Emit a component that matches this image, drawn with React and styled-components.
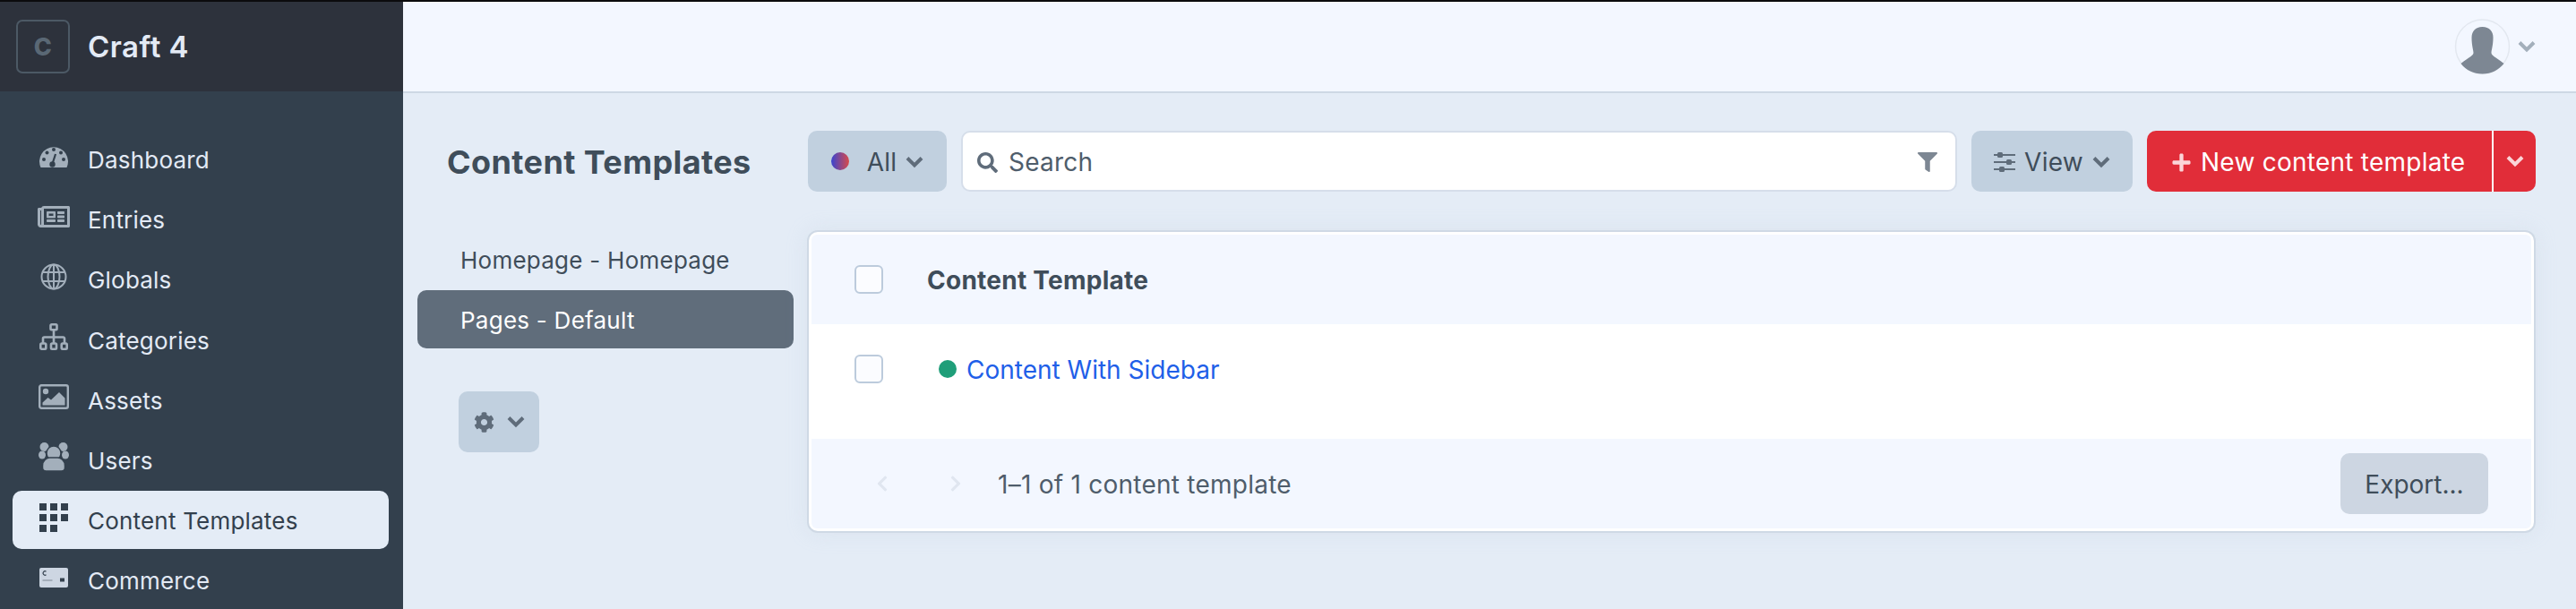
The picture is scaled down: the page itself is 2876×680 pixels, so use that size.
import React from 'react';
import styled, { createGlobalStyle } from 'styled-components';
import { FaRegNewspaper, FaChevronLeft, FaChevronRight, FaFilter, FaCog, FaPlus, FaSearch } from 'react-icons/fa';

const GlobalStyle = createGlobalStyle`
    html, body {
        margin: 0;
        padding: 0;
        background: #e4ecf6;
    }
    * {
        box-sizing: border-box;
    }
    body {
        font-family: Inter, 'Liberation Sans', sans-serif;
        font-size: 28px;
        letter-spacing: 0.25px;
        color: #3f4d5a;
    }
`;

const GaugeIcon = () => (
    <svg width="32" height="25" viewBox="0 0 32 25">
        <path d="M1.500 25A16 16 0 1 1 30.500 25Z" fill="currentColor" />
        <g fill="#33404d">
            <circle cx="5" cy="16" r="2" />
            <circle cx="8.500" cy="8.500" r="2" />
            <circle cx="16" cy="5" r="2" />
            <circle cx="24" cy="8.500" r="2" />
            <circle cx="27" cy="16" r="2" />
            <circle cx="14.500" cy="21.500" r="3.200" />
        </g>
        <path d="M14.500 21l3.500-11" stroke="#33404d" strokeWidth="2.200" />
    </svg>
);

const GlobeIcon = () => (
    <svg width="30" height="30" viewBox="0 0 30 30" fill="none" stroke="currentColor" strokeWidth="2">
        <circle cx="15" cy="15" r="13.500" />
        <ellipse cx="15" cy="15" rx="6.500" ry="13.500" />
        <path d="M15 1.500v27M2.500 10h25M2.500 20h25" />
    </svg>
);

const SitemapIcon = () => (
    <svg width="32" height="30" viewBox="0 0 32 30" fill="none" stroke="currentColor" strokeWidth="2.600">
        <rect x="12.500" y="1.300" width="7" height="6" rx="1.200" />
        <path d="M16 7v15M4 22v-5a1.500 1.500 0 0 1 1.500-1.500h21A1.500 1.500 0 0 1 28 17v5" />
        <rect x="1.300" y="22.500" width="6" height="6.200" rx="1.200" />
        <rect x="13" y="22.500" width="6" height="6.200" rx="1.200" />
        <rect x="24.700" y="22.500" width="6" height="6.200" rx="1.200" />
    </svg>
);

const PictureIcon = () => (
    <svg width="34" height="28" viewBox="0 0 34 28" fill="currentColor">
        <rect x="1.200" y="1.200" width="31.600" height="25.600" rx="2" fill="none" stroke="currentColor" strokeWidth="2.400" />
        <circle cx="8" cy="8" r="3.200" />
        <path d="M4.500 23.500v-3l6-5.500 3.500 2.500 9-8.500 6.500 6.500v8z" />
    </svg>
);

const UsersIcon = () => (
    <svg width="34" height="32" viewBox="0 0 34 32" fill="currentColor">
        <circle cx="6.500" cy="5" r="5" />
        <circle cx="27.500" cy="5" r="5" />
        <ellipse cx="4" cy="14" rx="4" ry="4.500" />
        <ellipse cx="30" cy="14" rx="4" ry="4.500" />
        <circle cx="17" cy="12" r="8" stroke="#33404d" strokeWidth="1.500" />
        <path d="M4.500 26c0-6 5-9 8-9h9c3 0 8 3 8 9v2c0 2.500-2 4-4 4h-17c-2 0-4-1.500-4-4z" stroke="#33404d" strokeWidth="1.500" />
    </svg>
);

const GridIcon = () => (
    <svg width="32" height="32" viewBox="0 0 32 32" fill="currentColor">
        {[[0, 0], [12, 0], [24, 0], [0, 12], [12, 12], [24, 12], [0, 24], [12, 24]].map(([x, y]) => (
            <rect key={`${x}-${y}`} x={x} y={y} width="8" height="8" />
        ))}
    </svg>
);

const CardIcon = () => (
    <svg width="32" height="22" viewBox="0 0 32 22">
        <rect width="32" height="22" rx="2" fill="#cdd6e2" />
        <path d="M7.500 4.200a2.200 2.200 0 1 0 0 3.600" fill="none" stroke="#33404d" strokeWidth="1.200" />
        <path d="M3.500 14h11" stroke="#7d8793" strokeWidth="1" />
        <rect x="23" y="11.500" width="5" height="4" fill="#33404d" />
    </svg>
);

const AvatarIcon = () => (
    <svg width="63" height="62" viewBox="0 0 63 62">
        <circle cx="31.500" cy="31" r="30" fill="none" stroke="#e3e8f0" strokeWidth="1.500" />
        <path d="M31.500 9c8 0 12 5 12 12 0 9-2 14-2 17 0 3 4 4 14 12-6 7-14 11.500-24 11.500S13.500 57.500 7.500 50c10-8 14-9 14-12 0-3-2-8-2-17 0-7 4-12 12-12z" fill="#7d8793" />
    </svg>
);

const SlidersIcon = () => (
    <svg width="24" height="22" viewBox="0 0 24 22" fill="#5f6c7a">
        <path d="M0 2h24v2H0zM0 10h24v2H0zM0 18h24v2H0z" />
        <rect x="4" y="0" width="6" height="6" rx="1.500" />
        <rect x="14" y="8" width="6" height="6" rx="1.500" />
        <rect x="6" y="16" width="6" height="6" rx="1.500" />
    </svg>
);

const ChevronGlyph = ({ className }) => (
    <svg className={className} width="20" height="14" viewBox="0 0 20 14" fill="none" stroke="currentColor" strokeWidth="4">
        <path d="M2 2.500l8 8 8-8" />
    </svg>
);

const navItems = [
    { label: 'Dashboard', icon: <GaugeIcon /> },
    { label: 'Entries', icon: <FaRegNewspaper size={36} /> },
    { label: 'Globals', icon: <GlobeIcon /> },
    { label: 'Categories', icon: <SitemapIcon /> },
    { label: 'Assets', icon: <PictureIcon /> },
    { label: 'Users', icon: <UsersIcon /> },
    { label: 'Content Templates', icon: <GridIcon />, active: true },
    { label: 'Commerce', icon: <CardIcon /> },
];

const App = () => (
    <Page>
        <GlobalStyle />
        <Sidebar>
            <Brand>
                <LogoBox>C</LogoBox>
                <BrandName>Craft 4</BrandName>
            </Brand>
            <Nav>
                {navItems.map(item => (
                    <NavItem key={item.label} $active={item.active}>
                        <NavIcon $active={item.active}>{item.icon}</NavIcon>
                        {item.label}
                    </NavItem>
                ))}
            </Nav>
        </Sidebar>
        <Main>
            <TopBar>
                <AvatarIcon />
                <UserChevron />
            </TopBar>
            <Content>
                <LeftColumn>
                    <Title>Content Templates</Title>
                    <SourceList>
                        <SourceItem>Homepage - Homepage</SourceItem>
                        <SourceItem $active>Pages - Default</SourceItem>
                    </SourceList>
                    <GearButton>
                        <FaCog size={23} />
                        <ButtonChevron />
                    </GearButton>
                </LeftColumn>
                <RightColumn>
                    <Toolbar>
                        <SoftButton $width="155px">
                            <StatusOrb />
                            All
                            <ButtonChevron />
                        </SoftButton>
                        <SearchBox>
                            <FaSearch size={23} color="#5f6c7a" />
                            <SearchText>Search</SearchText>
                            <FaFilter size={22} color="#7d8793" />
                        </SearchBox>
                        <SoftButton $width="180px">
                            <SlidersIcon />
                            View
                            <ButtonChevron />
                        </SoftButton>
                        <SplitButton>
                            <NewButton>
                                <FaPlus size={23} color="#fbd5d8" />
                                New content template
                            </NewButton>
                            <NewMenu>
                                <MenuChevron />
                            </NewMenu>
                        </SplitButton>
                    </Toolbar>
                    <Card>
                        <TableHead>
                            <Checkbox />
                            <HeadLabel>Content Template</HeadLabel>
                        </TableHead>
                        <TableRow>
                            <Checkbox />
                            <StatusDot />
                            <RowLink>Content With Sidebar</RowLink>
                        </TableRow>
                        <TableFooter>
                            <Pager>
                                <FaChevronLeft size={20} />
                                <FaChevronRight size={20} />
                            </Pager>
                            <Count>1–1 of 1 content template</Count>
                            <ExportButton>Export...</ExportButton>
                        </TableFooter>
                    </Card>
                </RightColumn>
            </Content>
        </Main>
    </Page>
);

export default App;

const Page = styled.div`
    display: flex;
    height: 680px;
    overflow: hidden;
    border-top: 2px solid #0b0b0d;
`;

const Sidebar = styled.aside`
    width: 450px;
    flex-shrink: 0;
    background-color: #33404d;
    overflow: hidden;
`;

const Brand = styled.div`
    height: 100px;
    display: flex;
    align-items: center;
    padding-left: 18px;
    background-color: #2d323c;
`;

const LogoBox = styled.div`
    width: 60px;
    height: 60px;
    display: flex;
    align-items: center;
    justify-content: center;
    border: 2px solid #4c5965;
    border-radius: 7px;
    color: #5a6875;
    font-size: 27px;
    font-weight: 800;
`;

const BrandName = styled.div`
    margin-left: 20px;
    color: #e3eaf5;
    font-size: 33px;
    font-weight: 600;
    letter-spacing: 0.5px;
`;

const Nav = styled.nav`
    display: flex;
    flex-direction: column;
    gap: 2.2px;
    padding: 43px 16px 0 14px;
`;

const NavItem = styled.div`
    height: 65px;
    flex-shrink: 0;
    display: flex;
    align-items: center;
    padding: 2px 0 0 28px;
    border-radius: 10px;
    font-size: 26px;
    letter-spacing: 0.2px;
    background-color: ${p => (p.$active ? '#e4ecf6' : 'transparent')};
    color: ${p => (p.$active ? '#33404d' : '#e3eaf5')};
`;

const NavIcon = styled.span`
    width: 36px;
    height: 36px;
    margin-right: 20px;
    margin-bottom: 8px;
    display: flex;
    align-items: center;
    justify-content: center;
    color: ${p => (p.$active ? '#33404d' : '#a3afbb')};
`;

const Main = styled.main`
    flex: 1;
    min-width: 0;
`;

const TopBar = styled.header`
    height: 102px;
    display: flex;
    align-items: center;
    justify-content: flex-end;
    gap: 8px;
    padding-right: 45px;
    background-color: #f3f7ff;
    border-bottom: 2px solid #cdd8e4;
`;

const UserChevron = styled(ChevronGlyph)`
    color: #a3afbb;
`;

const Content = styled.div`
    display: flex;
    padding: 42px 45px 0 0;
`;

const LeftColumn = styled.div`
    width: 451px;
    flex-shrink: 0;
`;

const Title = styled.h1`
    height: 68px;
    margin: 0 0 43px 49px;
    padding-top: 2px;
    display: flex;
    align-items: center;
    color: #3f4d5a;
    font-size: 36px;
    font-weight: 700;
    letter-spacing: 0.4px;
`;

const SourceList = styled.div`
    display: flex;
    flex-direction: column;
    gap: 2px;
    margin: 1px 15px 0 16px;
`;

const SourceItem = styled.div`
    height: 65px;
    display: flex;
    align-items: center;
    padding: 2px 0 0 48px;
    border-radius: 10px;
    font-size: 26px;
    background-color: ${p => (p.$active ? '#606d7b' : 'transparent')};
    color: ${p => (p.$active ? '#ffffff' : '#3f4d5a')};
`;

const ButtonChevron = styled(ChevronGlyph)`
    color: #5f6c7a;
`;

const MenuChevron = styled(ChevronGlyph)`
    color: #fbd5d8;
`;

const GearButton = styled.div`
    width: 90px;
    height: 68px;
    margin: 48px 0 0 62px;
    display: flex;
    align-items: center;
    justify-content: center;
    gap: 14px;
    border-radius: 10px;
    background-color: #c1d0df;
    color: #5f6c7a;
`;

const RightColumn = styled.div`
    flex: 1;
    min-width: 0;
`;

const Toolbar = styled.div`
    height: 68px;
    margin: 0 0 43px 1px;
    display: flex;
    align-items: stretch;
    gap: 16px;
`;

const SoftButton = styled.div`
    width: ${p => p.$width};
    flex-shrink: 0;
    padding-top: 2px;
    display: flex;
    align-items: center;
    justify-content: center;
    gap: 10px;
    border-radius: 10px;
    background-color: #c1d0df;
    color: #3f4d5a;
`;

const StatusOrb = styled.span`
    width: 20px;
    height: 20px;
    margin: 0 10px 2px 0;
    border-radius: 50%;
    background: linear-gradient(to right, #3a44d0, #d84a4a);
`;

const SearchBox = styled.div`
    flex: 1;
    min-width: 0;
    display: flex;
    align-items: center;
    padding: 2px 20px 0 16px;
    border: 2px solid #d6deea;
    border-radius: 10px;
    background-color: #ffffff;
`;

const SearchText = styled.span`
    flex: 1;
    margin-left: 12px;
    color: #4f5d6b;
`;

const SplitButton = styled.div`
    width: 434px;
    flex-shrink: 0;
    display: flex;
    overflow: hidden;
    border-radius: 10px;
    background-color: #e12d39;
    color: #ffffff;
`;

const NewButton = styled.div`
    flex: 1;
    display: flex;
    align-items: center;
    gap: 10px;
    padding: 2px 0 0 27px;
    border-right: 2px solid #ffffff;
`;

const NewMenu = styled.div`
    width: 47px;
    display: flex;
    align-items: center;
    justify-content: center;
`;

const Card = styled.section`
    height: 338px;
    display: flex;
    flex-direction: column;
    padding: 3px;
    border: 2px solid #cfd9e5;
    border-radius: 12px;
    background-color: #ffffff;
    box-shadow: 0 0 24px rgba(180, 195, 215, 0.2);
`;

const TableHead = styled.div`
    height: 100px;
    display: flex;
    align-items: center;
    padding-left: 48px;
    border-radius: 6px 6px 0 0;
    background-color: #f3f7ff;
`;

const Checkbox = styled.span`
    width: 32px;
    height: 32px;
    flex-shrink: 0;
    border: 2px solid #bccbdc;
    border-radius: 6px;
    background-color: #fbfcff;
`;

const HeadLabel = styled.div`
    margin-left: 49px;
    padding-top: 2px;
    color: #3f4d5a;
    font-weight: 700;
`;

const TableRow = styled.div`
    height: 128px;
    flex-shrink: 0;
    display: flex;
    align-items: center;
    padding: 0 0 28px 48px;
`;

const StatusDot = styled.span`
    width: 20px;
    height: 20px;
    margin: 0 11px 0 62px;
    border-radius: 50%;
    background-color: #1f9e79;
`;

const RowLink = styled.a`
    padding-top: 2px;
    color: #1f5fe8;
    letter-spacing: 0;
`;

const TableFooter = styled.div`
    flex: 1;
    display: flex;
    align-items: center;
    padding: 0 48px 0 69px;
    border-radius: 0 0 6px 6px;
    background-color: #f3f7ff;
`;

const Pager = styled.div`
    display: flex;
    gap: 62px;
    color: #e0e6f0;
`;

const Count = styled.div`
    flex: 1;
    margin-left: 37px;
    padding-top: 2px;
    color: #4f5d6b;
`;

const ExportButton = styled.div`
    width: 165px;
    height: 68px;
    padding-top: 2px;
    display: flex;
    align-items: center;
    justify-content: center;
    border-radius: 10px;
    background-color: #cdd6e2;
    color: #3f4d5a;
    letter-spacing: 0;
`;
